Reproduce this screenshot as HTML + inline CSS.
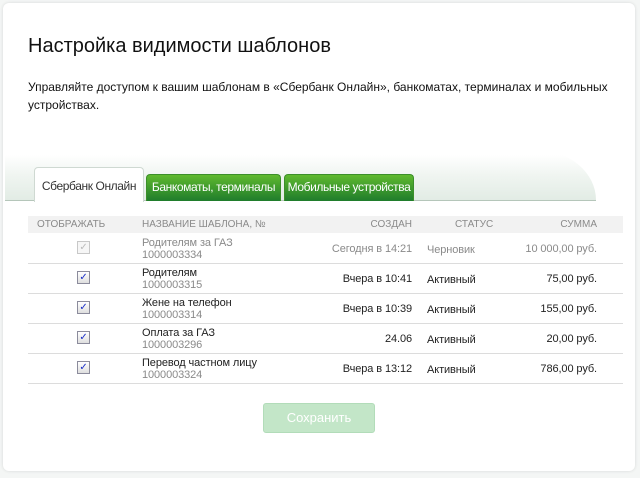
<!DOCTYPE html>
<html><head><meta charset="utf-8"><style>
body{margin:0;width:640px;height:478px;background:#f4f6f5;font-family:"Liberation Sans",sans-serif;position:relative;overflow:hidden}
.card{position:absolute;left:3px;top:3px;width:632px;height:468px;background:#fff;border-radius:6px;box-shadow:0 0 3px rgba(0,0,0,.12)}
.a{position:absolute;white-space:nowrap}
h1{position:absolute;left:28px;top:35px;margin:0;font-weight:normal;font-size:20px;color:#111}
.desc{position:absolute;left:28px;top:78px;font-size:12px;line-height:18px;color:#111;width:590px}
.bar{position:absolute;left:5px;top:150px;width:591px;height:50px;border-top-right-radius:60px 50px;background:linear-gradient(#fff 10%,#f0f5f1 50%,#e2ece5);border-bottom:1px solid #b5c6ba}
.tab{position:absolute;font-size:12px;color:#fff;text-align:center;border-radius:4px 4px 0 0;white-space:nowrap;letter-spacing:-0.4px;overflow:hidden}
.g{top:174px;height:26px;line-height:25px;background:linear-gradient(#5fb92e,#1f7c2c);border:1px solid #3c8f2a;border-bottom:none}
.act{left:34px;top:167px;width:108px;height:34px;line-height:36px;background:#fff;border:1px solid #cfd9d2;border-bottom:none;color:#333}
.hd{position:absolute;left:28px;top:216px;width:595px;height:17px;background:#f2f2f2;font-size:10px;color:#8a8a8a;line-height:17px}
.row{position:absolute;left:28px;width:595px;height:29px;border-bottom:1px solid #dcdcdc;font-size:11px;color:#222;letter-spacing:-0.1px}
.row .n{position:absolute;left:114px;top:3px;line-height:12px}
.row .n span{color:#8a8a8a}
.row .c{position:absolute;right:211px;top:9px}
.row .s{position:absolute;left:399px;top:10px}
.row .m{position:absolute;right:26px;top:9px}
.cb{position:absolute;left:49px;top:7px;width:11px;height:11px;border:1px solid #8c8c9c;background:linear-gradient(#fff,#dedede);font-size:10px;line-height:11px;text-align:center;color:#1a2ec8}
.btn{position:absolute;left:263px;top:403px;width:110px;height:28px;background:#c3e6c8;border:1px solid #b2dcb9;border-radius:3px;color:#fff;font-size:13px;text-align:center;line-height:28px}
</style></head><body>
<div class="card"></div>
<h1>Настройка видимости шаблонов</h1>
<div class="desc">Управляйте доступом к вашим шаблонам в «Сбербанк Онлайн», банкоматах, терминалах и мобильных устройствах.</div>
<div class="bar"></div>
<div class="tab act">Сбербанк Онлайн</div>
<div class="tab g" style="left:146px;width:133px">Банкоматы, терминалы</div>
<div class="tab g" style="left:284px;width:128px">Мобильные устройства</div>
<div class="hd"><span class="a" style="left:9px">ОТОБРАЖАТЬ</span><span class="a" style="left:114px">НАЗВАНИЕ ШАБЛОНА, №</span><span class="a" style="right:211px">СОЗДАН</span><span class="a" style="left:427px">СТАТУС</span><span class="a" style="right:26px">СУММА</span></div>
<div class="row" style="top:234px;color:#8a8a8a"><div class="cb" style="border-color:#c8c8c8;color:#bbb;background:#f6f6f6">✓</div><div class="n">Родителям за ГАЗ<br><span>1000003334</span></div><div class="c">Сегодня в 14:21</div><div class="s">Черновик</div><div class="m">10 000,00 руб.</div></div>
<div class="row" style="top:264px"><div class="cb">✓</div><div class="n">Родителям<br><span>1000003315</span></div><div class="c">Вчера в 10:41</div><div class="s">Активный</div><div class="m">75,00 руб.</div></div>
<div class="row" style="top:294px"><div class="cb">✓</div><div class="n">Жене на телефон<br><span>1000003314</span></div><div class="c">Вчера в 10:39</div><div class="s">Активный</div><div class="m">155,00 руб.</div></div>
<div class="row" style="top:324px"><div class="cb">✓</div><div class="n">Оплата за ГАЗ<br><span>1000003296</span></div><div class="c">24.06</div><div class="s">Активный</div><div class="m">20,00 руб.</div></div>
<div class="row" style="top:354px"><div class="cb">✓</div><div class="n">Перевод частном лицу<br><span>1000003324</span></div><div class="c">Вчера в 13:12</div><div class="s">Активный</div><div class="m">786,00 руб.</div></div>
<div class="btn">Сохранить</div>
</body></html>
